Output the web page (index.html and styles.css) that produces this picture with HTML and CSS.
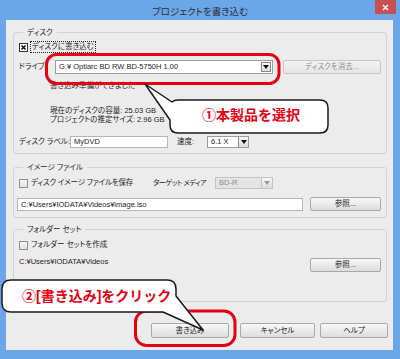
FILE: index.html
```html
<!DOCTYPE html>
<html lang="ja">
<head>
  <meta charset="UTF-8">
  <meta name="viewport" content="width=400, initial-scale=1.0">
  <title>プロジェクトを書き込む</title>
  <link rel="stylesheet" href="styles.css">
</head>
<body>
  <div class="window">
    <div class="titlebar">
      <span class="title">プロジェクトを書き込む</span>
      <span class="close">
        <svg width="7" height="7" viewBox="0 0 7 7"><path d="M1 1 L6 6 M6 1 L1 6" stroke="#fff" stroke-width="1.4"/></svg>
      </span>
    </div>

    <div class="client">
      <div class="group group-disc">
        <div class="group-title">ディスク</div>
        <div class="row row-check">
          <span class="check">
            <svg width="9" height="9" viewBox="0 0 9 9"><rect x="0.5" y="0.5" width="8" height="8" fill="#fff" stroke="#333"/><path d="M2.5 2.5 L6.5 6.5 M6.5 2.5 L2.5 6.5" stroke="#111" stroke-width="1.6"/></svg>
          </span>
          <span class="focus">ディスクに書き込む</span>
        </div>
        <div class="row row-drive">
          <span class="lbl lbl-drive">ドライブ:</span>
          <div class="combo combo-drive">
            <span class="combo-text">G:¥ Optiarc BD RW BD-5750H 1.00</span>
            <span class="arrow"></span>
          </div>
          <button class="btn btn-erase" disabled>ディスクを消去...</button>
        </div>
        <div class="status">書き込み準備ができました</div>
        <div class="info">現在のディスクの容量: 25.03 GB<br>プロジェクトの推定サイズ: 2.96 GB</div>
        <div class="row row-label">
          <span class="lbl lbl-disc">ディスク ラベル:</span>
          <div class="field field-label">MyDVD</div>
          <span class="lbl lbl-speed">速度:</span>
          <div class="combo combo-speed">
            <span class="combo-text">6.1 X</span>
            <span class="arrow"></span>
          </div>
        </div>
      </div>

      <div class="group group-image">
        <div class="group-title">イメージ ファイル</div>
        <div class="row row-check">
          <span class="check-wrap">
            <span class="check"></span>
            <span>ディスク イメージ ファイルを保存</span>
          </span>
          <span class="lbl lbl-media">ターゲット メディア</span>
          <div class="combo combo-media disabled">
            <span class="combo-text">BD-R</span>
            <span class="arrow"></span>
          </div>
        </div>
        <div class="row row-path">
          <div class="field field-path">C:¥Users¥IODATA¥Videos¥image.iso</div>
          <button class="btn btn-browse">参照...</button>
        </div>
      </div>

      <div class="group group-folder">
        <div class="group-title">フォルダー セット</div>
        <div class="row row-check">
          <span class="check"></span>
          <span>フォルダー セットを作成</span>
        </div>
        <div class="row row-folder">
          <span class="folder-path">C:¥Users¥IODATA¥Videos</span>
          <button class="btn btn-browse">参照...</button>
        </div>
      </div>

      <div class="actions">
        <button class="btn btn-write">書き込み</button>
        <button class="btn btn-cancel">キャンセル</button>
        <button class="btn btn-help">ヘルプ</button>
      </div>
    </div>

    <svg class="marks" width="400" height="359" viewBox="0 0 400 359">
      <rect x="46.5" y="54.5" width="232.5" height="29" rx="10" fill="none" stroke="#e50012" stroke-width="3"/>
      <rect x="135.5" y="311" width="99.5" height="34.5" rx="11" fill="none" stroke="#e50012" stroke-width="3"/>
      <path d="M178 100 H320 Q328 100 328 108 V125 Q328 133 320 133 H178 Q170 133 170 125 V120 L145 84 L172 102 Q174 100 178 100 Z" fill="#fff" stroke="#1a1a1a" stroke-width="1.5" stroke-linejoin="round"/>
      <path d="M11 280 H167 Q176 280 176 289 V296 L203 330 L163 312 H11 Q2 312 2 303 V289 Q2 280 11 280 Z" fill="#fff" stroke="#1a1a1a" stroke-width="1.5" stroke-linejoin="round"/>
    </svg>
    <div class="note note-select">①本製品を選択</div>
    <div class="note note-write">②[書き込み]をクリック</div>
  </div>
</body>
</html>
```

FILE: styles.css
```css
body {
  margin: 0;
  font-family: "Liberation Sans", "Noto Sans CJK JP", sans-serif;
  font-size: 7.5px;
  line-height: 10px;
  font-feature-settings: "palt";
  color: #1e1e1e;
}
.window {
  position: relative;
  width: 400px;
  height: 359px;
  background: #6ba6e8;
  overflow: hidden;
}
.titlebar {
  height: 20px;
  display: grid;
  grid-template-columns: 1fr auto 1fr;
  align-items: start;
}
.title {
  grid-column: 2;
  margin-top: 6px;
  font-size: 9.5px;
  line-height: 11px;
  color: #2e2e2e;
}
.close {
  grid-column: 3;
  justify-self: end;
  width: 21px;
  height: 14px;
  margin-right: 4px;
  background: #c75050;
  display: flex;
  align-items: center;
  justify-content: center;
}
.client {
  margin: 0 7px 0 6px;
  height: 330px;
  box-sizing: border-box;
  padding: 12px 6px 0 7px;
  background: #ececec;
}
.group {
  border: 1px solid #d3d3d3;
  border-radius: 3px;
  padding: 0 5px 5px 5px;
}
.group-title {
  width: fit-content;
  margin: -6px 0 0 4px;
  padding: 0 4px;
  background: #ececec;
  line-height: 11px;
}
.row {
  display: flex;
  align-items: center;
}
.row-check {
  height: 12px;
  margin-top: 3px;
}
.check {
  width: 9px;
  height: 9px;
  margin-right: 3px;
  box-sizing: border-box;
  border: 1px solid #8e8f8f;
  background: linear-gradient(#f6f6f6, #e2e2e2);
}
.group-disc .check {
  border: none;
  background: none;
}
.focus {
  outline: 1px dotted #222;
  padding: 0 1px;
  line-height: 10px;
}
.lbl {
  flex: none;
  white-space: nowrap;
}

/* combo boxes and fields */
.combo {
  display: flex;
  box-sizing: border-box;
  height: 14px;
  border: 1px solid #9c9c9c;
  background: #fff;
}
.combo-text {
  flex: 1;
  padding-left: 3px;
  line-height: 12px;
  white-space: nowrap;
  overflow: hidden;
}
.arrow {
  width: 10px;
  margin: 1px;
  box-sizing: border-box;
  border: 1px solid #8a8a8a;
  background: linear-gradient(#f6f6f6, #dcdcdc);
  display: flex;
  align-items: center;
  justify-content: center;
}
.arrow::after {
  content: "";
  border-top: 4px solid #111;
  border-left: 3px solid transparent;
  border-right: 3px solid transparent;
}
.combo.disabled {
  background: #e4e4e4;
  border-color: #c4c4c4;
  color: #8a8a8a;
}
.combo.disabled .arrow {
  border-color: #c4c4c4;
}
.combo.disabled .arrow::after {
  border-top-color: #9a9a9a;
}
.field {
  box-sizing: border-box;
  border: 1px solid #b5b5b5;
  background: #fff;
  padding-left: 3px;
  white-space: nowrap;
}

/* buttons */
.btn {
  flex: none;
  box-sizing: border-box;
  height: 14px;
  padding: 0;
  border: 1px solid #a9a9a9;
  border-radius: 2px;
  background: linear-gradient(#f8f8f8, #dddddd);
  font: inherit;
  line-height: 12px;
  color: #222;
}
.btn:disabled {
  border-color: #c6c6c6;
  background: linear-gradient(#f2f2f2, #e6e6e6);
  color: #8d8d8d;
}

/* disc group */
.row-drive {
  height: 14px;
  margin-top: 7px;
}
.lbl-drive {
  width: 36px;
}
.combo-drive {
  width: 218px;
}
.btn-erase {
  width: 98px;
  margin-left: 10px;
}
.status {
  margin-top: 7px;
  padding-left: 31px;
}
.info {
  margin-top: 15px;
  padding-left: 31px;
  line-height: 9px;
}
.row-label {
  height: 12px;
  margin-top: 12px;
}
.lbl-disc {
  width: 51px;
}
.field-label {
  width: 98px;
  height: 12px;
  line-height: 10px;
  margin-right: 9px;
}
.lbl-speed {
  width: 30px;
}
.combo-speed {
  width: 42px;
  height: 12px;
}
.combo-speed .combo-text {
  line-height: 10px;
}
.combo-speed .arrow {
  margin: 0;
  border-width: 0 0 0 1px;
}

/* image group */
.group-image {
  margin-top: 13px;
  padding-bottom: 6px;
}
.group-image .row-check {
  margin-top: 4px;
}
.check-wrap {
  width: 134px;
  display: flex;
  align-items: center;
  letter-spacing: -0.2px;
}
.lbl-media {
  width: 62px;
  font-size: 7.2px;
  letter-spacing: -0.5px;
}
.combo-media {
  width: 58px;
  height: 12px;
}
.combo-media .combo-text {
  line-height: 10px;
}
.combo-media .arrow {
  margin: 0;
  border-width: 0 0 0 1px;
  width: 11px;
}
.row-path {
  height: 14px;
  margin-top: 8px;
}
.field-path {
  width: 287px;
  height: 13px;
  line-height: 11px;
  margin-left: -2px;
}
.btn-browse {
  width: 71px;
  margin-left: 7px;
}

/* folder group */
.group-folder {
  margin-top: 11px;
  padding-bottom: 29px;
}
.group-folder .row-check {
  margin-top: 4px;
}
.row-folder {
  height: 14px;
  margin-top: 7px;
  align-items: flex-start;
}
.folder-path {
  width: 285px;
  margin-top: -1px;
}

/* dialog buttons */
.actions {
  display: flex;
  justify-content: flex-end;
  margin: 21px -1px 0 0;
}
.actions .btn {
  height: 15px;
  line-height: 13px;
}
.btn-write {
  width: 78px;
  margin-right: 11px;
}
.btn-cancel {
  width: 75px;
  margin-right: 5px;
}
.btn-help {
  width: 68px;
}

/* annotations drawn over the dialog */
.marks {
  position: absolute;
  left: 0;
  top: 0;
}
.note {
  position: absolute;
  font-size: 14px;
  line-height: 18px;
  font-weight: bold;
  font-feature-settings: normal;
  color: #e50012;
  white-space: nowrap;
}
.note-select {
  left: 202px;
  top: 106px;
}
.note-write {
  left: 22px;
  top: 287px;
}
```
